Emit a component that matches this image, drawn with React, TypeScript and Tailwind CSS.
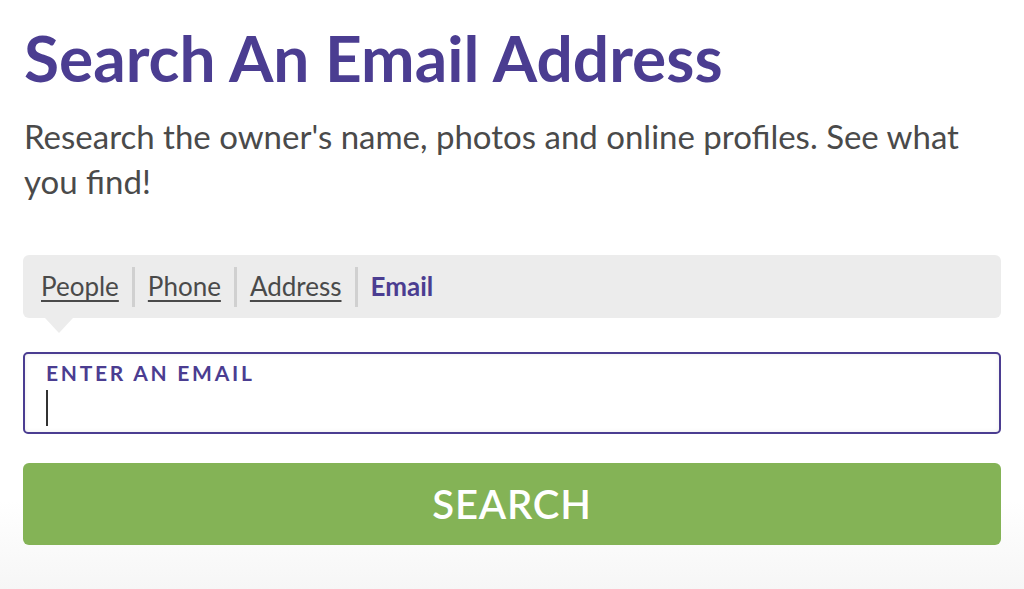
import React from 'react';

const tabs = ['People', 'Phone', 'Address'];

const App = () => {
  return (
    <div
      className="min-h-[589px] w-full bg-gradient-to-b from-white from-[85%] to-[#f6f6f6] px-[23px] pt-[22px]"
      style={{ fontFamily: 'Lato, "Open Sans", sans-serif' }}
    >
      <h1 className="text-[64px] font-bold leading-[72px] text-[#4b3d91] pl-[1px]">
        Search An Email Address
      </h1>
      <p className="mt-[20px] max-w-[975px] pl-[1px] text-[33px] leading-[45px] text-[#4a4a4a]">
        Research the owner's name, photos and online profiles. See what you find!
      </p>

      <div className="relative mt-[51px] flex h-[63px] items-center rounded-[6px] bg-[#ececec] px-[18px] text-[26px]">
        {tabs.map((t) => (
          <React.Fragment key={t}>
            <a className="text-[#4a4a4a] underline decoration-[2px] underline-offset-[4px]">{t}</a>
            <span className="mx-[13px] h-[40px] w-[3px] bg-[#d0d0d0]" />
          </React.Fragment>
        ))}
        <a className="font-bold text-[#4b3d91]">Email</a>
        <span className="absolute left-[22px] top-full h-0 w-0 border-x-[14px] border-t-[15px] border-x-transparent border-t-[#ececec]" />
      </div>

      <div className="mt-[34px] h-[82px] rounded-[5px] border-2 border-[#4b3d91] bg-white px-[21px] pt-[7px] shadow-[inset_0_0_4px_rgba(0,0,0,0.08)]">
        <div className="text-[21px] font-bold uppercase leading-[24px] tracking-[0.13em] text-[#4b3d91]">
          Enter an email
        </div>
        <div className="mt-[5px] h-[36px] w-[2px] bg-[#333]" />
      </div>

      <button className="mt-[29px] flex h-[82px] w-full items-center justify-center rounded-[6px] bg-[#84b356] text-[40px] font-semibold tracking-[0.02em] text-white">
        SEARCH
      </button>
    </div>
  );
};

export default App;
